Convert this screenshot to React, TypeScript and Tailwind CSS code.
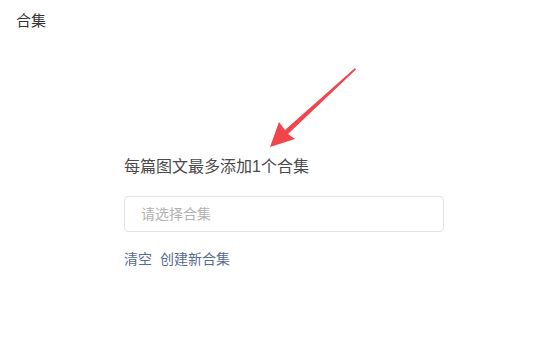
export default function App() {
  return (
    <div
      className="relative h-[339px] w-[535px] overflow-hidden bg-white text-[#333]"
      style={{ fontFamily: '"Liberation Sans", "Noto Sans CJK SC", sans-serif' }}
    >
      <div className="px-[16px] pt-[10px] text-[15px] leading-[22px] text-[#353535]">合集</div>

      <div className="pl-[124px] pt-[124px]">
        <p className="text-[16px] leading-[22px] text-[#4a4a4a]">每篇图文最多添加1个合集</p>
        <div className="mt-[18px] flex h-[36px] w-[320px] items-center rounded-[4px] border border-[#e2e2e2] px-[16px] text-[14px] text-[#b2b2b2]">
          请选择合集
        </div>
        <div className="mt-[17px] flex gap-[8px] text-[14px] leading-[20px] text-[#576b95]">
          <span>清空</span>
          <span>创建新合集</span>
        </div>
      </div>

      <svg className="absolute left-0 top-0" width="535" height="339" viewBox="0 0 535 339">
        <path d="M355 68 L356 69.5 L288 134 L295 139 L270 147 L279 122 L285 130 Z" fill="#f0464b" />
      </svg>
    </div>
  );
}
